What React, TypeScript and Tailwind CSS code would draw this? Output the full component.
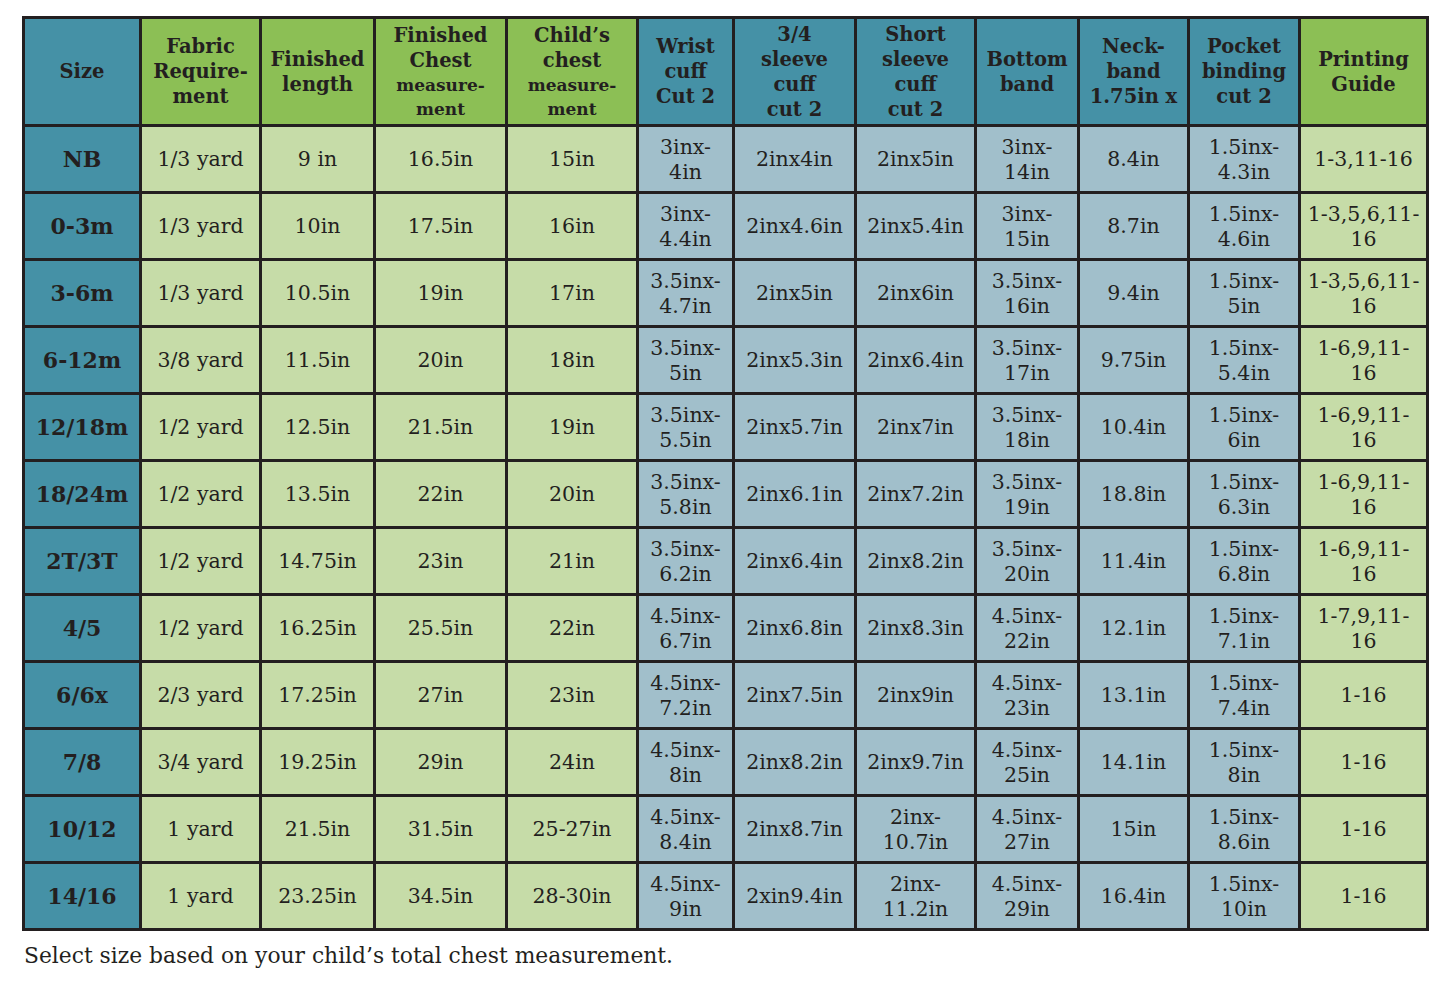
import React from 'react';

const cols = [114, 117, 111, 129, 128, 93, 119, 117, 100, 107, 108, 125];

// column colour groups: s = size, g = green, b = blue
const kinds = ['s', 'g', 'g', 'g', 'g', 'b', 'b', 'b', 'b', 'b', 'b', 'g'];

const headBg: Record<string, string> = {
    s: 'bg-[#4591a6]',
    g: 'bg-[#8cbf55]',
    b: 'bg-[#4591a6]',
};
const cellBg: Record<string, string> = {
    s: 'bg-[#4591a6]',
    g: 'bg-[#c6dca8]',
    b: 'bg-[#a1bfcb]',
};

type HLine = { t: string; small?: boolean };

const headers: HLine[][] = [
    [{ t: 'Size' }],
    [{ t: 'Fabric' }, { t: 'Require-' }, { t: 'ment' }],
    [{ t: 'Finished' }, { t: 'length' }],
    [{ t: 'Finished' }, { t: 'Chest' }, { t: 'measure-', small: true }, { t: 'ment', small: true }],
    [{ t: 'Child’s' }, { t: 'chest' }, { t: 'measure-', small: true }, { t: 'ment', small: true }],
    [{ t: 'Wrist' }, { t: 'cuff' }, { t: 'Cut 2' }],
    [{ t: '3/4' }, { t: 'sleeve' }, { t: 'cuff' }, { t: 'cut 2' }],
    [{ t: 'Short' }, { t: 'sleeve' }, { t: 'cuff' }, { t: 'cut 2' }],
    [{ t: 'Bottom' }, { t: 'band' }],
    [{ t: 'Neck-' }, { t: 'band' }, { t: '1.75in x' }],
    [{ t: 'Pocket' }, { t: 'binding' }, { t: 'cut 2' }],
    [{ t: 'Printing' }, { t: 'Guide' }],
];

const rows: string[][] = [
    ['NB', '1/3 yard', '9 in', '16.5in', '15in', '3inx-|4in', '2inx4in', '2inx5in', '3inx-|14in', '8.4in', '1.5inx-|4.3in', '1-3,11-16'],
    ['0-3m', '1/3 yard', '10in', '17.5in', '16in', '3inx-|4.4in', '2inx4.6in', '2inx5.4in', '3inx-|15in', '8.7in', '1.5inx-|4.6in', '1-3,5,6,11-|16'],
    ['3-6m', '1/3 yard', '10.5in', '19in', '17in', '3.5inx-|4.7in', '2inx5in', '2inx6in', '3.5inx-|16in', '9.4in', '1.5inx-|5in', '1-3,5,6,11-|16'],
    ['6-12m', '3/8 yard', '11.5in', '20in', '18in', '3.5inx-|5in', '2inx5.3in', '2inx6.4in', '3.5inx-|17in', '9.75in', '1.5inx-|5.4in', '1-6,9,11-|16'],
    ['12/18m', '1/2 yard', '12.5in', '21.5in', '19in', '3.5inx-|5.5in', '2inx5.7in', '2inx7in', '3.5inx-|18in', '10.4in', '1.5inx-|6in', '1-6,9,11-|16'],
    ['18/24m', '1/2 yard', '13.5in', '22in', '20in', '3.5inx-|5.8in', '2inx6.1in', '2inx7.2in', '3.5inx-|19in', '18.8in', '1.5inx-|6.3in', '1-6,9,11-|16'],
    ['2T/3T', '1/2 yard', '14.75in', '23in', '21in', '3.5inx-|6.2in', '2inx6.4in', '2inx8.2in', '3.5inx-|20in', '11.4in', '1.5inx-|6.8in', '1-6,9,11-|16'],
    ['4/5', '1/2 yard', '16.25in', '25.5in', '22in', '4.5inx-|6.7in', '2inx6.8in', '2inx8.3in', '4.5inx-|22in', '12.1in', '1.5inx-|7.1in', '1-7,9,11-|16'],
    ['6/6x', '2/3 yard', '17.25in', '27in', '23in', '4.5inx-|7.2in', '2inx7.5in', '2inx9in', '4.5inx-|23in', '13.1in', '1.5inx-|7.4in', '1-16'],
    ['7/8', '3/4 yard', '19.25in', '29in', '24in', '4.5inx-|8in', '2inx8.2in', '2inx9.7in', '4.5inx-|25in', '14.1in', '1.5inx-|8in', '1-16'],
    ['10/12', '1 yard', '21.5in', '31.5in', '25-27in', '4.5inx-|8.4in', '2inx8.7in', '2inx-|10.7in', '4.5inx-|27in', '15in', '1.5inx-|8.6in', '1-16'],
    ['14/16', '1 yard', '23.25in', '34.5in', '28-30in', '4.5inx-|9in', '2xin9.4in', '2inx-|11.2in', '4.5inx-|29in', '16.4in', '1.5inx-|10in', '1-16'],
];

const serif = { fontFamily: '"DejaVu Serif", serif' };

export default function App() {
    return (
        <div className="min-h-screen bg-white text-[#231f20]" style={serif}>
            <div className="pt-[16px] pl-[22px]">
                <div
                    className="inline-grid gap-[3px] p-[3px] bg-[#231f20]"
                    style={{
                        gridTemplateColumns: cols.map((c) => `${c}px`).join(' '),
                        gridTemplateRows: `105px repeat(12, 64px)`,
                    }}
                >
                    {headers.map((h, i) => (
                        <div
                            key={'h' + i}
                            className={`${headBg[kinds[i]]} flex flex-col items-center justify-center text-center font-bold whitespace-nowrap`}
                        >
                            {h.map((l, j) => (
                                <span
                                    key={j}
                                    className={
                                        l.small
                                            ? 'text-[17px] leading-[24px]'
                                            : 'text-[19.5px] leading-[25px]'
                                    }
                                >
                                    {l.t}
                                </span>
                            ))}
                        </div>
                    ))}
                    {rows.map((r, ri) =>
                        r.map((v, ci) => (
                            <div
                                key={ri + '-' + ci}
                                className={`${cellBg[kinds[ci]]} flex flex-col items-center justify-center text-center whitespace-nowrap pt-px ${
                                    ci === 0
                                        ? 'font-bold text-[22px]'
                                        : 'text-[20.5px] leading-[25px]'
                                }`}
                            >
                                {v.split('|').map((p, k) => (
                                    <span key={k}>{p}</span>
                                ))}
                            </div>
                        )),
                    )}
                </div>
            </div>
            <p className="pl-[24px] pt-[9px] text-[21.8px]">
                Select size based on your child’s total chest measurement.
            </p>
        </div>
    );
}
